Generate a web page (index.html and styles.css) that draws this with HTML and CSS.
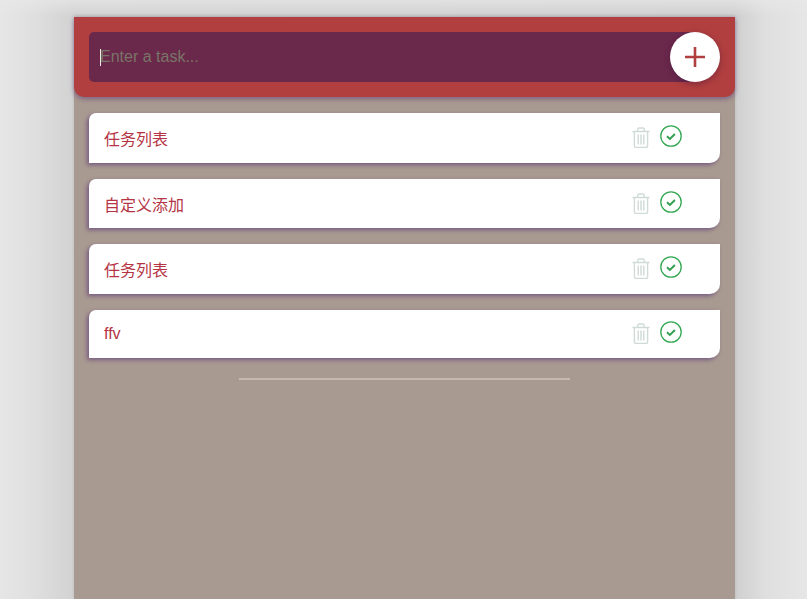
FILE: index.html
```html
<!DOCTYPE html>
<html lang="zh">
<head>
<meta charset="utf-8">
<title>Tasks</title>
<link rel="stylesheet" href="styles.css">
</head>
<body>
<main class="app">
  <header class="top">
    <div class="entry">
      <span class="caret"></span>
      <input class="task-input" type="text" placeholder="Enter a task...">
    </div>
    <button class="add" aria-label="Add">
      <svg width="22" height="22" viewBox="0 0 22 22"><path d="M11 1v20M1 11h20" fill="none" stroke="#b13f3f" stroke-width="2.6"/></svg>
    </button>
  </header>
  <ul class="list">
    <li class="item"><span class="label">任务列表</span>
      <span class="actions">
        <svg class="trash" width="18" height="21" viewBox="0 0 18 21"><g fill="none" stroke="#cfdbd6" stroke-width="1.4" stroke-linecap="round"><path d="M1 4.5h16M5.8 4.5V2.4c0-.8.6-1.4 1.4-1.4h3.6c.8 0 1.4.6 1.4 1.4v2.1M2.4 4.5v14.2c0 1 .8 1.8 1.8 1.8h9.6c1 0 1.8-.8 1.8-1.8V4.5M6.2 8v9M9 8v9M11.8 8v9"/></g></svg>
        <svg class="check" width="22" height="22" viewBox="0 0 22 22"><circle cx="11" cy="11" r="10.2" fill="none" stroke="#34a853" stroke-width="1.3"/><path d="M7 11.3l2.9 2.7 5-5" fill="none" stroke="#2f9e4d" stroke-width="1.9"/></svg>
      </span></li>
    <li class="item"><span class="label">自定义添加</span>
      <span class="actions">
        <svg class="trash" width="18" height="21" viewBox="0 0 18 21"><g fill="none" stroke="#cfdbd6" stroke-width="1.4" stroke-linecap="round"><path d="M1 4.5h16M5.8 4.5V2.4c0-.8.6-1.4 1.4-1.4h3.6c.8 0 1.4.6 1.4 1.4v2.1M2.4 4.5v14.2c0 1 .8 1.8 1.8 1.8h9.6c1 0 1.8-.8 1.8-1.8V4.5M6.2 8v9M9 8v9M11.8 8v9"/></g></svg>
        <svg class="check" width="22" height="22" viewBox="0 0 22 22"><circle cx="11" cy="11" r="10.2" fill="none" stroke="#34a853" stroke-width="1.3"/><path d="M7 11.3l2.9 2.7 5-5" fill="none" stroke="#2f9e4d" stroke-width="1.9"/></svg>
      </span></li>
    <li class="item"><span class="label">任务列表</span>
      <span class="actions">
        <svg class="trash" width="18" height="21" viewBox="0 0 18 21"><g fill="none" stroke="#cfdbd6" stroke-width="1.4" stroke-linecap="round"><path d="M1 4.5h16M5.8 4.5V2.4c0-.8.6-1.4 1.4-1.4h3.6c.8 0 1.4.6 1.4 1.4v2.1M2.4 4.5v14.2c0 1 .8 1.8 1.8 1.8h9.6c1 0 1.8-.8 1.8-1.8V4.5M6.2 8v9M9 8v9M11.8 8v9"/></g></svg>
        <svg class="check" width="22" height="22" viewBox="0 0 22 22"><circle cx="11" cy="11" r="10.2" fill="none" stroke="#34a853" stroke-width="1.3"/><path d="M7 11.3l2.9 2.7 5-5" fill="none" stroke="#2f9e4d" stroke-width="1.9"/></svg>
      </span></li>
    <li class="item item-latin"><span class="label">ffv</span>
      <span class="actions">
        <svg class="trash" width="18" height="21" viewBox="0 0 18 21"><g fill="none" stroke="#cfdbd6" stroke-width="1.4" stroke-linecap="round"><path d="M1 4.5h16M5.8 4.5V2.4c0-.8.6-1.4 1.4-1.4h3.6c.8 0 1.4.6 1.4 1.4v2.1M2.4 4.5v14.2c0 1 .8 1.8 1.8 1.8h9.6c1 0 1.8-.8 1.8-1.8V4.5M6.2 8v9M9 8v9M11.8 8v9"/></g></svg>
        <svg class="check" width="22" height="22" viewBox="0 0 22 22"><circle cx="11" cy="11" r="10.2" fill="none" stroke="#34a853" stroke-width="1.3"/><path d="M7 11.3l2.9 2.7 5-5" fill="none" stroke="#2f9e4d" stroke-width="1.9"/></svg>
      </span></li>
  </ul>
  <div class="divider"></div>
</main>
</body>
</html>
```
FILE: styles.css
```css
* { box-sizing: border-box; }
html, body { height: 100%; }
body {
  margin: 0;
  overflow: hidden;
  background:
    linear-gradient(180deg, rgba(232, 232, 232, 0.7) 0, rgba(232, 232, 232, 0) 16px),
    linear-gradient(90deg, #e6e6e6 0, #e0e0e0 30px, #d2d2d2 74px, #cfcfcf 735px, #dfdfdf 765px, #e6e6e6 807px);
  font-family: "Liberation Sans", "Noto Sans CJK SC", sans-serif;
  padding-top: 17px;
}
.app {
  width: 661px;
  height: 582px;
  margin-left: 74px;
  background: #a99a91;
  box-shadow: 0 -1px 3px rgba(0, 0, 0, 0.12);
}
.top {
  height: 80px;
  padding: 15px;
  display: flex;
  background: #b13f3f;
  border-radius: 0 0 10px 10px;
  box-shadow: 0 2px 5px rgba(90, 50, 120, 0.55);
}
.entry {
  flex: 1;
  height: 50px;
  margin-right: -25px;
  padding-left: 11px;
  display: flex;
  align-items: center;
  background: #6a284b;
  border-radius: 5px 0 0 5px;
}
.caret { width: 1px; height: 17px; margin-right: -1px; background: #eee; flex: none; }
.task-input {
  flex: 1;
  min-width: 0;
  padding: 0;
  border: 0;
  outline: 0;
  background: transparent;
  font: 16px "Liberation Sans", sans-serif;
  color: #fff;
}
.task-input::placeholder { color: #7a7468; opacity: 1; }
.add {
  position: relative;
  flex: none;
  width: 50px;
  height: 50px;
  padding: 0;
  border: 0;
  border-radius: 50%;
  display: flex;
  align-items: center;
  justify-content: center;
  background: #fff;
  box-shadow: 0 2px 6px rgba(60, 20, 60, 0.45);
}
.list {
  list-style: none;
  margin: 0;
  padding: 16px 15px 0;
  display: flex;
  flex-direction: column;
  gap: 16px;
}
.item {
  height: 49.7px;
  padding: 0 38px 0 15px;
  display: flex;
  justify-content: space-between;
  align-items: center;
  background: #fff;
  border-radius: 7px 0 10px 0;
  box-shadow: -2px 2px 4px rgba(90, 55, 120, 0.65);
  font-size: 16px;
  color: #b43444;
}
.item-latin { height: 48.4px; margin-top: -0.5px; }
.actions { display: flex; align-items: center; gap: 10px; margin-top: -4px; }
.trash { margin-top: 3px; margin-left: -1px; }
.divider {
  width: 331px;
  height: 2px;
  margin: 20px 0 0 165px;
  background: #c4bab3;
}
```
